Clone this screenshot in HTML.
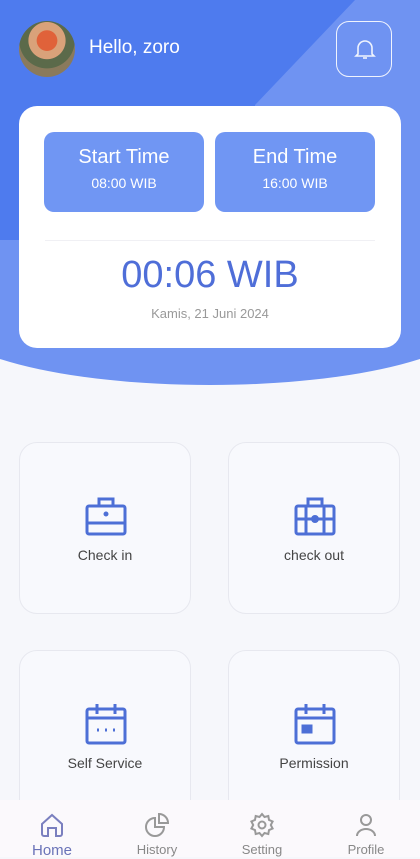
<!DOCTYPE html>
<html><head><meta charset="utf-8"><style>
*{margin:0;padding:0;box-sizing:border-box}
body{width:420px;height:857px;overflow:hidden;background:#f6f7fb;font-family:"Liberation Sans",sans-serif;position:relative}
.hdr{position:absolute;left:-60px;top:-400px;width:540px;height:785px;border-radius:0 0 50% 50%/0 0 70px 70px;background:#6f93f2;overflow:hidden}
.dark{position:absolute;left:0;top:0;width:540px;height:785px;background:#4e7bee;clip-path:polygon(0 0,415px 0,415px 400px,315px 505px,315px 640px,0 640px)}
.av{position:absolute;left:19px;top:21px;width:56px;height:56px;border-radius:50%;background:radial-gradient(circle at 50% 35%,#e0623a 0 22%,#d9a27a 23% 40%,#5b6a4a 41% 60%,#8a7a5c 61%);}
.hello{position:absolute;left:89px;top:37px;color:#fff;font-size:19px}
.bell{position:absolute;left:336px;top:21px;width:56px;height:56px;border:1.5px solid #fff;border-radius:13px;opacity:.9}
.card{position:absolute;left:19px;top:106px;width:382px;height:242px;background:#fff;border-radius:18px}
.tb{position:absolute;top:26px;width:160px;height:80px;background:#7096f3;border-radius:10px;color:#fff;text-align:center}
.tb b{display:block;font-weight:normal;font-size:20px;margin-top:14px}
.tb span{display:block;font-size:14px;margin-top:6px}
.line{position:absolute;left:26px;right:26px;top:134px;border-top:1px solid #f0f0f4}
.time{position:absolute;left:0;right:0;top:148px;text-align:center;color:#4f6ed8;font-size:38px}
.date{position:absolute;left:0;right:0;top:200px;text-align:center;color:#999;font-size:13px}
.tile{position:absolute;width:172px;height:172px;border:1px solid #e7e8ef;border-radius:18px;background:#f8f9fd;text-align:center}
.tile svg{position:absolute;left:65px;top:52px}
.tile div{position:absolute;left:0;right:0;top:104px;font-size:14px;color:#444}
.nav{position:absolute;left:0;top:800px;width:420px;height:57px;background:#fbf9fc}
.ni{position:absolute;top:12px;width:80px;text-align:center;color:#888;font-size:13px}
.ni svg{display:block;margin:0 auto 4px}
</style></head><body>
<div class="hdr"><div class="dark"></div></div>
<div class="av"></div>
<div class="hello">Hello, zoro</div>
<div class="bell"><svg width="56" height="56" viewBox="0 0 56 56" fill="none" stroke="#fff" stroke-width="1.6"><path d="M21 32v-6a7 7 0 0 1 14 0v6l2 2H19z"/><path d="M26 36h4"/></svg></div>
<div class="card">
<div class="tb" style="left:25px"><b>Start Time</b><span>08:00 WIB</span></div>
<div class="tb" style="left:196px"><b>End Time</b><span>16:00 WIB</span></div>
<div class="line"></div>
<div class="time">00:06 WIB</div>
<div class="date">Kamis, 21 Juni 2024</div>
</div>
<div class="tile" style="left:19px;top:442px"><svg width="42" height="42" viewBox="0 0 42 42" fill="none" stroke="#4d6fd6" stroke-width="3"><rect x="2" y="11" width="38" height="28" rx="2"/><path d="M14 11V4h14v7M2 28h38"/><circle cx="21" cy="19" r="1" fill="#4d6fd6"/></svg><div>Check in</div></div>
<div class="tile" style="left:228px;top:442px"><svg width="42" height="42" viewBox="0 0 42 42" fill="none" stroke="#4d6fd6" stroke-width="3"><rect x="2" y="11" width="38" height="28" rx="2"/><path d="M14 11V4h14v7M12 11v28M30 11v28M2 24h38"/><circle cx="21" cy="24" r="2.5"/></svg><div>check out</div></div>
<div class="tile" style="left:19px;top:650px"><svg width="42" height="42" viewBox="0 0 42 42" fill="none" stroke="#4d6fd6" stroke-width="3"><rect x="2" y="6" width="38" height="34" rx="2"/><path d="M2 15h38M12 1v10M30 1v10"/><path d="M12 27h2M20 27h2M28 27h2"/></svg><div>Self Service</div></div>
<div class="tile" style="left:228px;top:650px"><svg width="42" height="42" viewBox="0 0 42 42" fill="none" stroke="#4d6fd6" stroke-width="3"><rect x="2" y="6" width="38" height="34" rx="2"/><path d="M2 15h38M12 1v10M30 1v10"/><rect x="9" y="23" width="8" height="6" fill="#4d6fd6"/></svg><div>Permission</div></div>
<div class="nav">
<div class="ni" style="left:12px;color:#6a73b8;font-size:15px"><svg width="26" height="26" viewBox="0 0 26 26" fill="none" stroke="#7a7fbf" stroke-width="2"><path d="M3 12l10-9 10 9v10a2 2 0 0 1-2 2h-4v-8h-8v8H5a2 2 0 0 1-2-2z"/></svg>Home</div>
<div class="ni" style="left:117px"><svg width="26" height="26" viewBox="0 0 26 26" fill="none" stroke="#999" stroke-width="2"><path d="M11 6a9 9 0 1 0 9 9h-9z"/><path d="M15 2a9 9 0 0 1 9 9h-9z"/></svg>History</div>
<div class="ni" style="left:222px"><svg width="26" height="26" viewBox="0 0 26 26" fill="none" stroke="#999" stroke-width="2"><circle cx="13" cy="13" r="3.5"/><path d="M13 2l2.5 3 3.8-1 .7 3.9 3.6 1.6-1.8 3.5 1.8 3.5-3.6 1.6-.7 3.9-3.8-1L13 24l-2.5-3-3.8 1-.7-3.9-3.6-1.6L4.2 13 2.4 9.5 6 7.9l.7-3.9 3.8 1z"/></svg>Setting</div>
<div class="ni" style="left:326px"><svg width="26" height="26" viewBox="0 0 26 26" fill="none" stroke="#999" stroke-width="2"><circle cx="13" cy="8" r="5"/><path d="M4 24a9 7 0 0 1 18 0"/></svg>Profile</div>
</div>
</body></html>
